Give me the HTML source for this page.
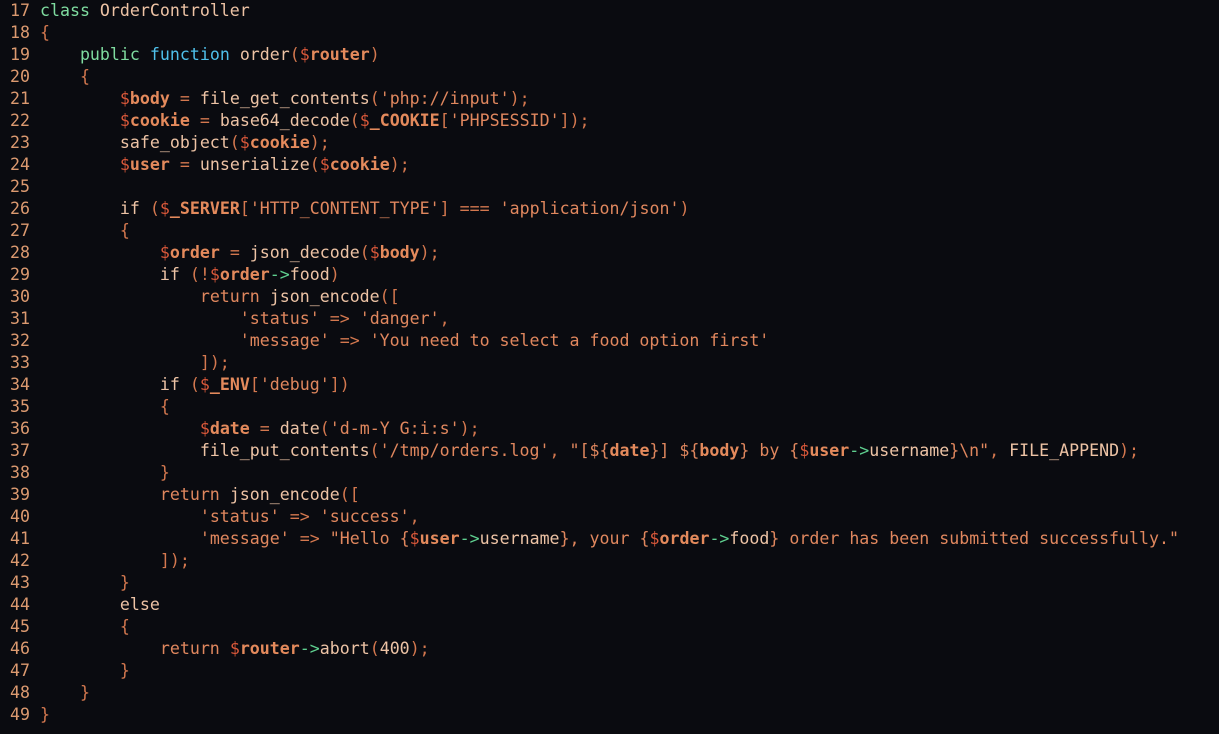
<!DOCTYPE html>
<html><head><meta charset="utf-8"><style>
html,body{margin:0;padding:0;background:#0a0b10;width:1219px;height:734px;overflow:hidden}
pre{margin:0;padding:0;position:absolute;left:10px;top:0px;font-family:"DejaVu Sans Mono","Liberation Mono",monospace;font-size:16.6px;line-height:22px;color:#edc3a5}
.n{color:#dc9a70}.p{color:#d4784f}.s{color:#e0875e}.d{color:#d9583a}.v{color:#e48a5c;font-weight:bold}
.k{color:#7fdca0}.f{color:#4fc0ea}.a{color:#5fd090}
</style></head><body><pre>
<span class="n">17</span> <span class="k">class</span> OrderController
<span class="n">18</span> <span class="p">{</span>
<span class="n">19</span>     <span class="k">public</span> <span class="f">function</span> order<span class="p">(</span><span class="d">$</span><span class="v">router</span><span class="p">)</span>
<span class="n">20</span>     <span class="p">{</span>
<span class="n">21</span>         <span class="d">$</span><span class="v">body</span> <span class="p">=</span> file_get_contents<span class="p">(</span><span class="s">'php://input'</span><span class="p">);</span>
<span class="n">22</span>         <span class="d">$</span><span class="v">cookie</span> <span class="p">=</span> base64_decode<span class="p">(</span><span class="d">$</span><span class="v">_COOKIE</span><span class="p">[</span><span class="s">'PHPSESSID'</span><span class="p">]);</span>
<span class="n">23</span>         safe_object<span class="p">(</span><span class="d">$</span><span class="v">cookie</span><span class="p">);</span>
<span class="n">24</span>         <span class="d">$</span><span class="v">user</span> <span class="p">=</span> unserialize<span class="p">(</span><span class="d">$</span><span class="v">cookie</span><span class="p">);</span>
<span class="n">25</span>
<span class="n">26</span>         if <span class="p">(</span><span class="d">$</span><span class="v">_SERVER</span><span class="p">[</span><span class="s">'HTTP_CONTENT_TYPE'</span><span class="p">]</span> <span class="p">===</span> <span class="s">'application/json'</span><span class="p">)</span>
<span class="n">27</span>         <span class="p">{</span>
<span class="n">28</span>             <span class="d">$</span><span class="v">order</span> <span class="p">=</span> json_decode<span class="p">(</span><span class="d">$</span><span class="v">body</span><span class="p">);</span>
<span class="n">29</span>             if <span class="p">(!</span><span class="d">$</span><span class="v">order</span><span class="a">-&gt;</span>food<span class="p">)</span>
<span class="n">30</span>                 <span class="s">return</span> json_encode<span class="p">([</span>
<span class="n">31</span>                     <span class="s">'status'</span> <span class="p">=&gt;</span> <span class="s">'danger'</span><span class="p">,</span>
<span class="n">32</span>                     <span class="s">'message'</span> <span class="p">=&gt;</span> <span class="s">'You need to select a food option first'</span>
<span class="n">33</span>                 <span class="p">]);</span>
<span class="n">34</span>             if <span class="p">(</span><span class="d">$</span><span class="v">_ENV</span><span class="p">[</span><span class="s">'debug'</span><span class="p">])</span>
<span class="n">35</span>             <span class="p">{</span>
<span class="n">36</span>                 <span class="d">$</span><span class="v">date</span> <span class="p">=</span> date<span class="p">(</span><span class="s">'d-m-Y G:i:s'</span><span class="p">);</span>
<span class="n">37</span>                 file_put_contents<span class="p">(</span><span class="s">'/tmp/orders.log'</span><span class="p">,</span> <span class="s">"[${</span><span class="v">date</span><span class="s">}] ${</span><span class="v">body</span><span class="s">} by {</span><span class="d">$</span><span class="v">user</span><span class="a">-&gt;</span>username<span class="s">}\n"</span><span class="p">,</span> FILE_APPEND<span class="p">);</span>
<span class="n">38</span>             <span class="p">}</span>
<span class="n">39</span>             <span class="s">return</span> json_encode<span class="p">([</span>
<span class="n">40</span>                 <span class="s">'status'</span> <span class="p">=&gt;</span> <span class="s">'success'</span><span class="p">,</span>
<span class="n">41</span>                 <span class="s">'message'</span> <span class="p">=&gt;</span> <span class="s">"Hello {</span><span class="d">$</span><span class="v">user</span><span class="a">-&gt;</span>username<span class="s">}, your {</span><span class="d">$</span><span class="v">order</span><span class="a">-&gt;</span>food<span class="s">} order has been submitted successfully."</span>
<span class="n">42</span>             <span class="p">]);</span>
<span class="n">43</span>         <span class="p">}</span>
<span class="n">44</span>         else
<span class="n">45</span>         <span class="p">{</span>
<span class="n">46</span>             <span class="s">return</span> <span class="d">$</span><span class="v">router</span><span class="a">-&gt;</span>abort<span class="p">(</span>400<span class="p">);</span>
<span class="n">47</span>         <span class="p">}</span>
<span class="n">48</span>     <span class="p">}</span>
<span class="n">49</span> <span class="p">}</span>
</pre></body></html>
